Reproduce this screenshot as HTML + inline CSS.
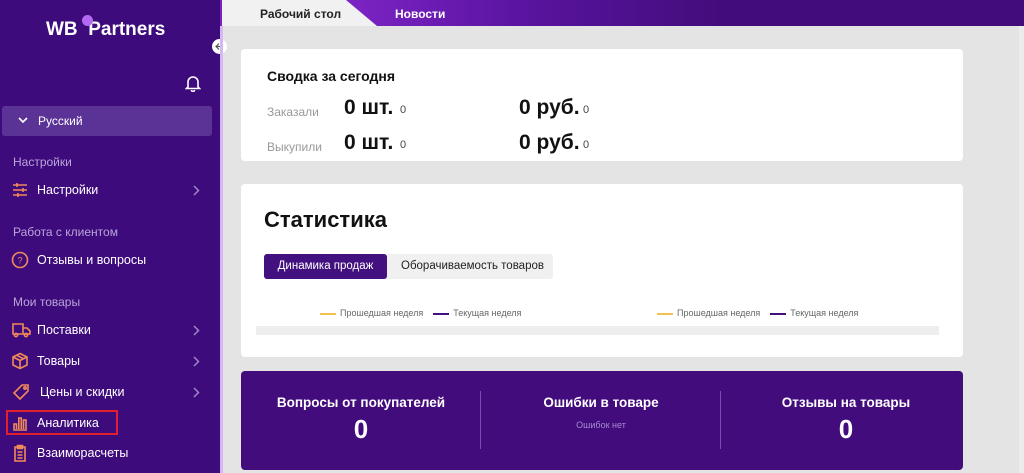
<!DOCTYPE html>
<html><head><meta charset="utf-8">
<style>
*{margin:0;padding:0;box-sizing:border-box}
body{width:1024px;height:473px;overflow:hidden;font-family:"Liberation Sans","DejaVu Sans",sans-serif;background:#e4e4e4;position:relative}
.sb{position:absolute;left:0;top:0;width:220px;height:473px;background:#3e0b7d;color:#fff}
.logo{position:absolute;left:46px;top:19px;font-size:19px;font-weight:bold;letter-spacing:0}
.dot{position:absolute;left:82px;top:15px;width:11px;height:11px;border-radius:50%;background:#b36af0}
.bell{position:absolute;left:185px;top:74px}
.lang{position:absolute;left:2px;top:106px;width:210px;height:30px;background:#5b3396;border-radius:3px;font-size:12px;line-height:30px;padding-left:36px}
.lang svg{position:absolute;left:16px;top:11px}
.sec{position:absolute;left:13px;font-size:12px;color:#b9a6d8}
.it{position:absolute;left:0;width:220px;font-size:12.5px;height:20px;line-height:20px}
.it .ic{position:absolute;left:11px;top:1px}
.it .tx{position:absolute;left:37px}
.it .ch{position:absolute;left:193px;top:5px}
.red{position:absolute;left:6px;top:410px;width:112px;height:25px;border:2px solid #e0202e}
.back{position:absolute;left:212px;top:39px;width:15px;height:15px;border-radius:50%;background:#fff}
.top{position:absolute;left:220px;top:0;width:804px;height:26px;background:linear-gradient(90deg,#7a22c2 140px,#5a14a0 300px,#430c7c 500px)}
.tab1{position:absolute;left:222px;top:0;width:155px;height:26px;background:#f1f1f1;clip-path:polygon(0 0,124px 0,155px 26px,0 26px);font-size:12px;font-weight:bold;padding:7px 0 0 38px;color:#222}
.tab2{position:absolute;left:395px;top:7px;font-size:12px;font-weight:bold;color:#fff}
.strip{position:absolute;left:220px;top:26px;width:3px;height:447px;background:#d5b8f3}
.card{position:absolute;left:241px;width:722px;background:#fff;border-radius:4px}
.lbl{position:absolute;font-size:12px;color:#999}
.big{position:absolute;font-size:21px;font-weight:bold;color:#111}
.sm{position:absolute;font-size:11px;color:#444}
.pc{position:absolute;left:241px;top:371px;width:722px;height:99px;background:#430c7c;border-radius:4px;color:#fff;text-align:center}
.pc .col{position:absolute;top:24px;width:240px}
.pc h3{font-size:13.5px;font-weight:bold}
.pc .n{font-size:26px;font-weight:bold;margin-top:4px}
.vl{position:absolute;top:20px;width:1px;height:58px;background:#7a4fb0}
.leg{position:absolute;top:308px;font-size:9px;color:#666}
.leg i{display:inline-block;width:16px;height:2px;vertical-align:middle;margin-right:4px}
</style></head><body>
<div class="sb">
 <div class="logo">WB&nbsp;&nbsp;Partners</div><div class="dot"></div>
 <svg class="bell" width="16" height="18" viewBox="0 0 16 18"><path d="M3 13V8a5 5 0 0 1 10 0v5l1.5 1.5h-13Z M6.5 16a1.5 1.5 0 0 0 3 0" fill="none" stroke="#fff" stroke-width="1.6"/></svg>
 <div class="lang"><svg width="10" height="7" viewBox="0 0 10 7"><path d="M1 1l4 4 4-4" fill="none" stroke="#fff" stroke-width="1.6"/></svg>Русский</div>
 <div class="sec" style="top:155px">Настройки</div>
 <div class="it" style="top:180px"><svg class="ic" width="18" height="18" viewBox="0 0 18 18" stroke="#f08a5a" stroke-width="1.6"><path d="M2 4h14M2 9h14M2 14h14"/><path d="M6 2v4M12 7v4M7 12v4"/></svg><span class="tx">Настройки</span><svg class="ch" width="7" height="11" viewBox="0 0 7 11"><path d="M1 1l4.5 4.5L1 10" fill="none" stroke="#9c86c4" stroke-width="1.5"/></svg></div>
 <div class="sec" style="top:225px">Работа с клиентом</div>
 <div class="it" style="top:250px"><svg class="ic" width="18" height="18" viewBox="0 0 18 18"><circle cx="9" cy="9" r="7.5" fill="none" stroke="#f08a5a" stroke-width="1.6"/><text x="9" y="12.5" font-size="9" fill="#f08a5a" text-anchor="middle" font-family="Liberation Sans">?</text></svg><span class="tx">Отзывы и вопросы</span></div>
 <div class="sec" style="top:295px">Мои товары</div>
 <div class="it" style="top:320px"><svg class="ic" width="20" height="18" viewBox="0 0 20 18" fill="none" stroke="#f08a5a" stroke-width="1.6"><path d="M2 3h10v10H2z M12 7h4l3 3v3h-7"/><circle cx="5" cy="14" r="1.6"/><circle cx="15" cy="14" r="1.6"/></svg><span class="tx">Поставки</span><svg class="ch" width="7" height="11" viewBox="0 0 7 11"><path d="M1 1l4.5 4.5L1 10" fill="none" stroke="#9c86c4" stroke-width="1.5"/></svg></div>
 <div class="it" style="top:351px"><svg class="ic" width="18" height="18" viewBox="0 0 18 18" fill="none" stroke="#f08a5a" stroke-width="1.6"><path d="M9 1.5l7 3.5v8l-7 3.5-7-3.5v-8z M2 5l7 3.5 7-3.5 M9 8.5v8 M5.5 3.2l7 3.5"/></svg><span class="tx">Товары</span><svg class="ch" width="7" height="11" viewBox="0 0 7 11"><path d="M1 1l4.5 4.5L1 10" fill="none" stroke="#9c86c4" stroke-width="1.5"/></svg></div>
 <div class="it" style="top:382px"><svg class="ic" width="20" height="18" viewBox="0 0 20 18" fill="none" stroke="#f08a5a" stroke-width="1.6"><path d="M11 2h6v6l-8 8-6-6z"/><circle cx="14" cy="5" r="1.2"/></svg><span class="tx" style="left:40px">Цены и скидки</span><svg class="ch" width="7" height="11" viewBox="0 0 7 11"><path d="M1 1l4.5 4.5L1 10" fill="none" stroke="#9c86c4" stroke-width="1.5"/></svg></div>
 <div class="it" style="top:413px"><svg class="ic" width="18" height="18" viewBox="0 0 18 18" fill="none" stroke="#f08a5a" stroke-width="1.6"><path d="M2 16h14 M3 15v-5h2.5v5 M7.8 15V4h2.5v11 M12.5 15V6H15v9"/></svg><span class="tx">Аналитика</span></div>
 <div class="red"></div>
 <div class="it" style="top:443px"><svg class="ic" width="18" height="18" viewBox="0 0 18 18" fill="none" stroke="#f08a5a" stroke-width="1.6"><path d="M4 3h10v14H4z M6.5 1.5h5v3h-5z M6.5 8h5 M6.5 11h5 M6.5 14h5"/></svg><span class="tx">Взаиморасчеты</span></div>
</div>
<div class="back"><svg width="15" height="15" viewBox="0 0 15 15"><path d="M11 7.5H4.5M7 4.5l-3 3 3 3" fill="none" stroke="#555" stroke-width="1.2"/></svg></div>
<div class="top"></div>
<div class="tab1">Рабочий стол</div>
<div class="tab2">Новости</div>
<div class="strip"></div>

<div class="card" style="top:49px;height:112px">
 <div style="position:absolute;left:26px;top:19px;font-size:14px;font-weight:bold;color:#111">Сводка за сегодня</div>
 <div class="lbl" style="left:26px;top:56px">Заказали</div>
 <div class="big" style="left:103px;top:47px">0 шт.</div><div class="sm" style="left:159px;top:55px">0</div>
 <div class="big" style="left:278px;top:47px">0 руб.</div><div class="sm" style="left:342px;top:55px">0</div>
 <div class="lbl" style="left:26px;top:91px">Выкупили</div>
 <div class="big" style="left:103px;top:82px">0 шт.</div><div class="sm" style="left:159px;top:90px">0</div>
 <div class="big" style="left:278px;top:82px">0 руб.</div><div class="sm" style="left:342px;top:90px">0</div>
</div>

<div class="card" style="top:184px;height:173px">
 <div style="position:absolute;left:23px;top:23px;font-size:22px;font-weight:bold;color:#111">Статистика</div>
 <div style="position:absolute;left:23px;top:70px;width:289px;height:25px;background:#f0f0f0;border-radius:3px"></div>
 <div style="position:absolute;left:23px;top:70px;width:123px;height:25px;background:#43107f;border-radius:3px;color:#fff;font-size:11.5px;line-height:25px;text-align:center">Динамика продаж</div>
 <div style="position:absolute;left:160px;top:70px;font-size:11.5px;line-height:25px;color:#222">Оборачиваемость товаров</div>
 <div style="position:absolute;left:15px;top:142px;width:683px;height:9px;background:#eeeeee"></div>
</div>
<div class="leg" style="left:320px"><i style="background:#f3c24e"></i>Прошедшая неделя&nbsp;&nbsp;&nbsp;&nbsp;<i style="background:#43107f"></i>Текущая неделя</div>
<div class="leg" style="left:657px"><i style="background:#f3c24e"></i>Прошедшая неделя&nbsp;&nbsp;&nbsp;&nbsp;<i style="background:#43107f"></i>Текущая неделя</div>

<div class="pc">
 <div class="col" style="left:0"><h3>Вопросы от покупателей</h3><div class="n">0</div></div>
 <div class="vl" style="left:239px"></div>
 <div class="col" style="left:240px"><h3>Ошибки в товаре</h3><div style="font-size:9px;color:#a58bd0;margin-top:10px">Ошибок нет</div></div>
 <div class="vl" style="left:479px"></div>
 <div class="col" style="left:485px"><h3>Отзывы на товары</h3><div class="n">0</div></div>
</div>
<div style="position:absolute;left:1019px;top:26px;width:5px;height:447px;background:#ececec"></div>
</body></html>
